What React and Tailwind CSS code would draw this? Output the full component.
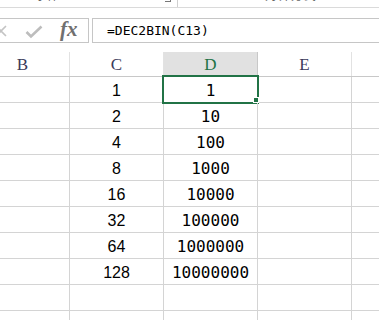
import React from "react";

const rows = [
  ["1", "1"],
  ["2", "10"],
  ["4", "100"],
  ["8", "1000"],
  ["16", "10000"],
  ["32", "100000"],
  ["64", "1000000"],
  ["128", "10000000"],
  ["", ""],
  ["", ""],
];

const sans = { fontFamily: '"Liberation Sans", Arial, sans-serif' };
const mono = { fontFamily: '"DejaVu Sans Mono", "Liberation Mono", monospace' };
const serif = { fontFamily: '"Liberation Serif", "Times New Roman", serif' };

export default function App() {
  return (
    <div className="w-[379px] h-[320px] overflow-hidden bg-white relative">
      {/* ribbon remnants */}
      <div className="h-[8px] border-b border-[#dadada] flex overflow-hidden text-[#666] text-[12px] leading-[12px]" style={{ fontFamily: '"Noto Sans CJK SC", sans-serif' }}>
        <div className="w-[35px]" />
        <div className="-mt-[11px]">字体</div>
        <div className="w-[106px]" />
        <div className="-mt-[4px] w-[6px] h-[6px] border-r border-b border-[#777]" />
        <div className="w-[6px]" />
        <div className="w-px h-[8px] bg-[#d0d0d0]" />
        <div className="w-[87px]" />
        <div className="-mt-[11px] tracking-[1px]">对齐方式</div>
      </div>

      {/* formula bar */}
      <div className="mt-[10px] flex h-[25px]">
        <div className="-ml-[10px] w-[99px] border border-[#c6c6c6] flex items-center relative">
          <svg width="14" height="14" viewBox="0 0 14 14" className="ml-[3px]">
            <path d="M2 2 L12 12 M12 2 L2 12" stroke="#c4c4c4" strokeWidth="1.6" fill="none" />
          </svg>
          <svg width="18" height="14" viewBox="0 0 18 14" className="ml-[17px] mt-[3px]">
            <path d="M1.5 7 L6 11.5 L16.5 1.5" stroke="#bdbdbd" strokeWidth="2.6" fill="none" />
          </svg>
          <span className="ml-[17px] italic font-bold text-[#707070] text-[21px] leading-none -mt-[2px]" style={serif}>
            fx
          </span>
        </div>
        <div className="ml-[3px] flex-1 border border-[#c6c6c6] border-r-0 flex items-center pl-[14px] text-[13px] text-black" style={mono}>
          =DEC2BIN(C13)
        </div>
      </div>

      {/* grid */}
      <div className="mt-[9px] -ml-[24px]">
        {/* header */}
        <div className="flex h-[25px] border-b border-[#c8c8c8] text-[17px] text-[#3a3a5a]" style={serif}>
          <div className="w-[94px] shrink-0 border-r border-[#e2e2e2] flex items-center justify-center pt-[1px]">B</div>
          <div className="w-[94px] shrink-0 border-r border-[#e2e2e2] flex items-center justify-center pt-[1px]">C</div>
          <div className="w-[94px] shrink-0 border-r border-[#c8c8c8] bg-[#e1e1e1] text-[#217346] flex items-center justify-center pt-[1px]">D</div>
          <div className="w-[94px] shrink-0 border-r border-[#e2e2e2] flex items-center justify-center pt-[1px]">E</div>
          <div className="flex-1" />
        </div>
        {rows.map(([c, d], i) => (
          <div key={i} className="flex h-[26px] border-b border-[#d4d4d4] text-black">
            <div className="w-[94px] shrink-0 border-r border-[#d4d4d4]" />
            <div className="w-[94px] shrink-0 border-r border-[#d4d4d4] flex items-center justify-center pt-[3px] text-[16px]" style={sans}>
              {c}
            </div>
            <div className="w-[94px] shrink-0 border-r border-[#d4d4d4] flex items-center justify-center pt-[2px] text-[16px] relative" style={mono}>
              {d}
              {i === 0 && (
                <div className="absolute left-[-2px] top-[-2px] w-[97px] h-[29px] border-2 border-[#217346]">
                  <div className="absolute left-[89px] top-[20px] w-[6px] h-[6px] bg-[#217346] border border-white" />
                </div>
              )}
            </div>
            <div className="w-[94px] shrink-0 border-r border-[#d4d4d4]" />
            <div className="flex-1" />
          </div>
        ))}
      </div>
    </div>
  );
}
